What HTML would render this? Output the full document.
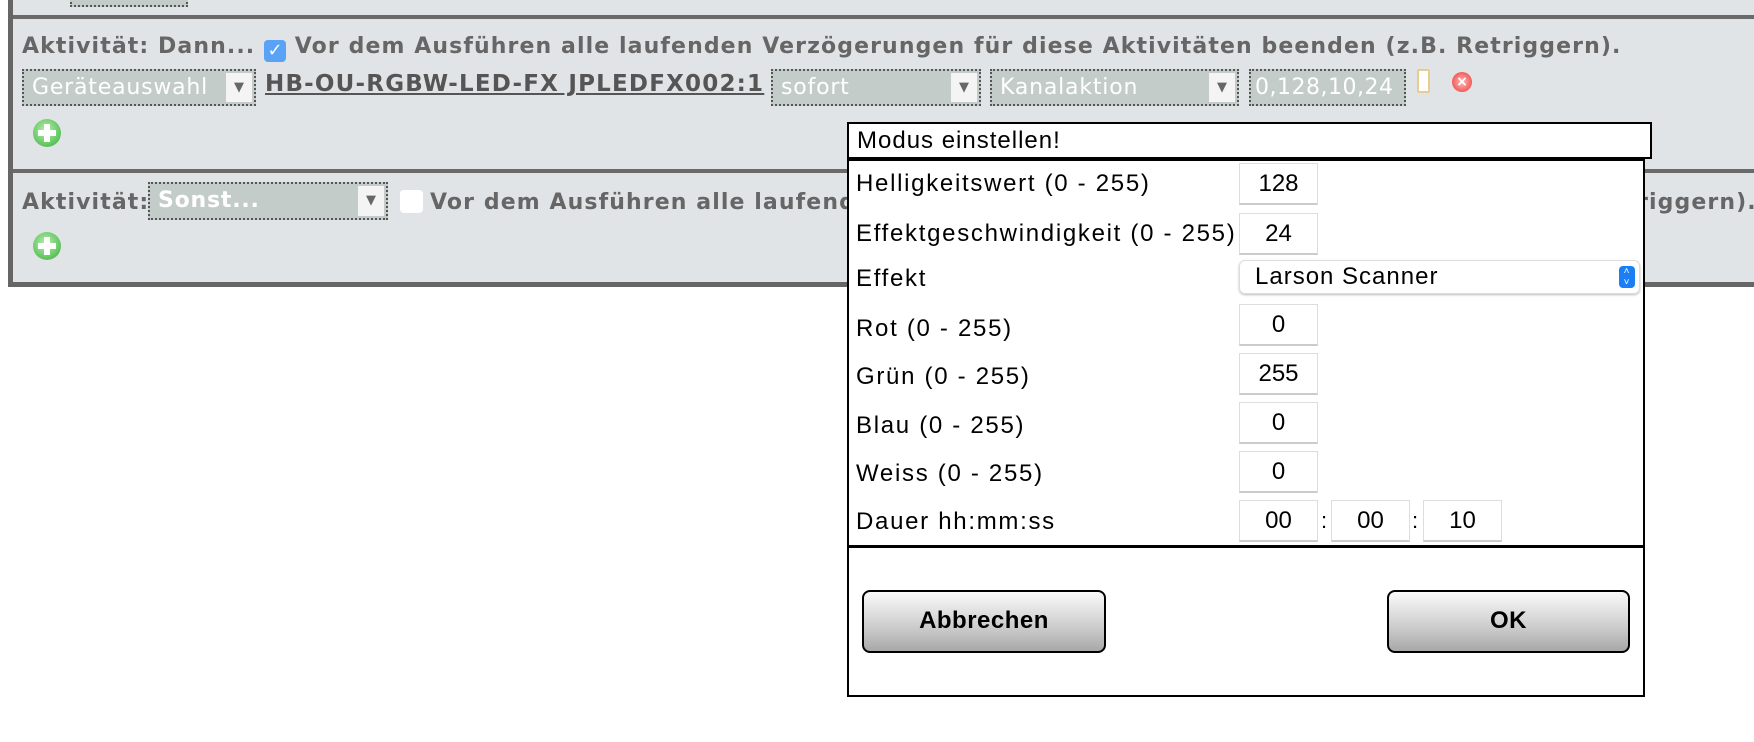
<!DOCTYPE html>
<html><head><meta charset="utf-8"><style>
*{box-sizing:border-box;margin:0;padding:0}
body{width:1754px;height:742px;background:#fff;position:relative;overflow:hidden;font-family:"DejaVu Sans","Liberation Sans",sans-serif}
.a{position:absolute}
.panel{left:8px;top:-10px;width:1760px;height:297px;background:#e1e4e6;border:5px solid #666;}
.hl{height:4px;background:#6a6a6a;left:13px;width:1745px}
.t{color:#666;font-weight:bold;font-size:22px;letter-spacing:1.1px;white-space:nowrap}
.sel{background:#c4ccca;border:2px dotted #555;color:#fff;font-size:22px;letter-spacing:0.8px;padding-left:8px;line-height:34px;white-space:nowrap;overflow:hidden}
.arr{position:absolute;right:2px;top:2px;width:26px;bottom:2px;background:#f4f4f4;color:#666;font-size:13px;text-align:center;line-height:30px;letter-spacing:0}
.plus{width:28px;height:28px;border-radius:50%;background:radial-gradient(circle at 45% 40%,#b8f0b0,#5cc25a 70%,#3c9a3c);}
.plus:before{content:"";position:absolute;left:11px;top:5px;width:6px;height:18px;background:#fff}
.plus:after{content:"";position:absolute;left:5px;top:11px;width:18px;height:6px;background:#fff}
.dlg{font-family:"Liberation Sans",sans-serif;color:#000}
.lab{font-size:24px;letter-spacing:1.7px;left:856px;white-space:nowrap}
.inp{background:#fff;border:1px solid #ddd;border-bottom:2px solid #ccc;width:79px;height:42px;text-align:center;font-size:24px;line-height:40px;font-family:"Liberation Sans",sans-serif}
.btn{border:2px solid #000;border-radius:8px;background:linear-gradient(#fafafa,#ccc 60%,#a8a8a8);font-weight:bold;font-size:24px;letter-spacing:0.5px;text-align:center;line-height:58px}
</style></head><body>
<div class="a panel"></div>
<div class="a" style="left:70px;top:-5px;width:118px;height:12px;background:#c4ccca;border:2px dotted #555"></div>
<div class="a hl" style="top:15px"></div>
<div class="a t" style="left:22px;top:34px;">Aktivität: Dann... <span style="display:inline-block;width:22px;height:22px;background:#5aa2f5;border-radius:4px;color:#fff;font-size:18px;line-height:22px;text-align:center;vertical-align:-3px;letter-spacing:0">✓</span> Vor dem Ausführen alle laufenden Verzögerungen für diese Aktivitäten beenden (z.B. Retriggern).</div>
<div class="a sel" style="left:22px;top:69px;width:234px;height:37px">Geräteauswahl<div class="arr">▼</div></div>
<div class="a t" style="left:265px;top:71px;text-decoration:underline;font-size:23px;color:#555;letter-spacing:1.2px">HB-OU-RGBW-LED-FX JPLEDFX002:1</div>
<div class="a sel" style="left:771px;top:69px;width:210px;height:37px">sofort<div class="arr">▼</div></div>
<div class="a sel" style="left:990px;top:69px;width:249px;height:37px">Kanalaktion<div class="arr">▼</div></div>
<div class="a sel" style="left:1249px;top:69px;width:157px;height:37px;padding-left:4px;letter-spacing:0.5px">0,128,10,24</div>
<div class="a" style="left:1417px;top:69px;width:13px;height:24px;background:#fff;border:2px solid #e8cc90;border-radius:2px"></div>
<div class="a" style="left:1452px;top:72px;width:20px;height:20px;border-radius:50%;background:radial-gradient(#fbb,#e33);color:#fff;font-size:14px;line-height:20px;text-align:center;font-weight:bold">×</div>
<div class="a plus" style="left:33px;top:119px"></div>
<div class="a hl" style="top:169px"></div>
<div class="a t" style="left:22px;top:190px">Aktivität:</div>
<div class="a sel" style="left:148px;top:182px;width:240px;height:38px;font-weight:bold">Sonst...<div class="arr">▼</div></div>
<div class="a" style="left:400px;top:190px;width:23px;height:23px;background:#fff;border-radius:4px"></div>
<div class="a t" style="left:430px;top:190px">Vor dem Ausführen alle laufenden Verzögerungen für diese Aktivitäten beenden (z.B. Retriggern).</div>
<div class="a plus" style="left:33px;top:232px"></div>

<div class="a dlg" style="left:847px;top:159px;width:798px;height:538px;background:#fff;border:2px solid #000"></div>
<div class="a dlg" style="left:847px;top:122px;width:805px;height:37px;background:#fff;border:2px solid #000;font-size:24px;letter-spacing:1px;padding-left:8px;line-height:33px">Modus einstellen!</div>
<div class="a" style="left:847px;top:545px;width:798px;height:3px;background:#000"></div>
<div class="a dlg lab" style="top:170px">Helligkeitswert (0 - 255)</div>
<div class="a dlg lab" style="top:220px">Effektgeschwindigkeit (0 - 255)</div>
<div class="a dlg lab" style="top:265px">Effekt</div>
<div class="a dlg lab" style="top:315px">Rot (0 - 255)</div>
<div class="a dlg lab" style="top:363px">Grün (0 - 255)</div>
<div class="a dlg lab" style="top:412px">Blau (0 - 255)</div>
<div class="a dlg lab" style="top:460px">Weiss (0 - 255)</div>
<div class="a dlg lab" style="top:508px">Dauer hh:mm:ss</div>
<div class="a inp" style="left:1239px;top:163px">128</div>
<div class="a inp" style="left:1239px;top:213px">24</div>
<div class="a" style="left:1239px;top:260px;width:401px;height:34px;border:1px solid #ddd;border-radius:6px;box-shadow:0 1px 2px #bbb;font-family:'Liberation Sans',sans-serif;font-size:24px;letter-spacing:1px;line-height:32px;padding-left:15px">Larson Scanner<div class="a" style="right:4px;top:5px;width:16px;height:22px;background:#1a7ef5;border-radius:4px;color:#fff;font-size:10px;line-height:11px;text-align:center">˄<br>˅</div></div>
<div class="a inp" style="left:1239px;top:304px">0</div>
<div class="a inp" style="left:1239px;top:353px">255</div>
<div class="a inp" style="left:1239px;top:402px">0</div>
<div class="a inp" style="left:1239px;top:451px">0</div>
<div class="a inp" style="left:1239px;top:500px">00</div>
<div class="a dlg" style="left:1321px;top:508px;font-size:22px">:</div>
<div class="a inp" style="left:1331px;top:500px">00</div>
<div class="a dlg" style="left:1412px;top:508px;font-size:22px">:</div>
<div class="a inp" style="left:1423px;top:500px">10</div>
<div class="a btn dlg" style="left:862px;top:590px;width:244px;height:63px">Abbrechen</div>
<div class="a btn dlg" style="left:1387px;top:590px;width:243px;height:63px">OK</div>
</body></html>
